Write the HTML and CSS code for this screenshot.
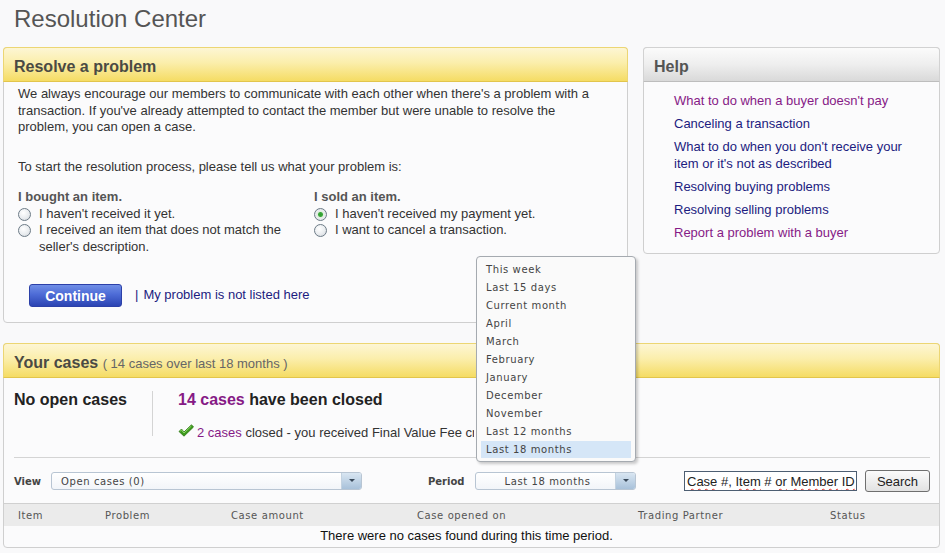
FILE: index.html
```html
<!DOCTYPE html>
<html lang="en">
<head>
    <meta charset="UTF-8">
    <title>Resolution Center</title>
    <link rel="stylesheet" href="styles.css">
</head>
<body>
    <div class="page">
        <h1 class="page-title">Resolution Center</h1>

        <div class="top-row">
            <div class="box resolve">
                <div class="box-head yellow"><h2>Resolve a problem</h2></div>
                <div class="resolve-body">
                    <p class="intro">We always encourage our members to communicate with each other when there's a problem with a transaction. If you've already attempted to contact the member but were unable to resolve the problem, you can open a case.</p>
                    <p class="prompt">To start the resolution process, please tell us what your problem is:</p>

                    <div class="choices">
                        <div class="choice-group">
                            <h3>I bought an item.</h3>
                            <label class="option"><input type="radio" name="problem"><span>I haven't received it yet.</span></label>
                            <label class="option"><input type="radio" name="problem"><span>I received an item that does not match the seller's description.</span></label>
                        </div>
                        <div class="choice-group">
                            <h3>I sold an item.</h3>
                            <label class="option"><input type="radio" name="problem" checked><span>I haven't received my payment yet.</span></label>
                            <label class="option"><input type="radio" name="problem"><span>I want to cancel a transaction.</span></label>
                        </div>
                    </div>

                    <div class="actions">
                        <button class="btn-continue">Continue</button>
                        <span class="sep">|</span>
                        <a href="#" class="link">My problem is not listed here</a>
                    </div>
                </div>
            </div>

            <div class="box help">
                <div class="box-head gray"><h2>Help</h2></div>
                <ul class="help-links">
                    <li><a href="#" class="visited">What to do when a buyer doesn't pay</a></li>
                    <li><a href="#" class="link">Canceling a transaction</a></li>
                    <li><a href="#" class="link">What to do when you don't receive your item or it's not as described</a></li>
                    <li><a href="#" class="link">Resolving buying problems</a></li>
                    <li><a href="#" class="link">Resolving selling problems</a></li>
                    <li><a href="#" class="visited">Report a problem with a buyer</a></li>
                </ul>
            </div>
        </div>

        <div class="box cases">
            <div class="box-head yellow">
                <h2>Your cases <span class="count">( 14 cases over last 18 months )</span></h2>
            </div>

            <div class="summary">
                <div class="open-cases">No open cases</div>
                <div class="closed-cases">
                    <div class="closed-title"><a href="#" class="visited">14 cases</a> have been closed</div>
                    <div class="closed-line">
                        <svg class="check" width="16" height="13" viewBox="0 0 16 13">
                            <path d="M1 7.5 L3.5 5 L6 8 L13.5 0.8 L15.5 3 L6 12.2 Z" fill="#3c9a1c" stroke="#2a7410" stroke-width="0.8" stroke-linejoin="round"/>
                            <path d="M2.2 7.2 L3.5 6 L6 9 L13.4 2" fill="none" stroke="#8fd86a" stroke-width="1"/>
                        </svg>
                        <span class="closed-text"><a href="#" class="visited">2 cases</a> closed - you received Final Value Fee credit</span>
                    </div>
                </div>
            </div>

            <div class="filters">
                <div class="filter view-filter">
                    <span class="filter-label">View</span>
                    <div class="select wide">
                        <span class="select-text">Open cases (0)</span>
                        <span class="select-arrow"></span>
                    </div>
                </div>

                <div class="filter period-filter">
                    <span class="filter-label">Period</span>
                    <div class="select-wrap">
                        <div class="select narrow">
                            <span class="select-text centered">Last 18 months</span>
                            <span class="select-arrow"></span>
                        </div>
                        <ul class="dropdown">
                            <li>This week</li>
                            <li>Last 15 days</li>
                            <li>Current month</li>
                            <li>April</li>
                            <li>March</li>
                            <li>February</li>
                            <li>January</li>
                            <li>December</li>
                            <li>November</li>
                            <li>Last 12 months</li>
                            <li class="selected">Last 18 months</li>
                        </ul>
                    </div>
                </div>

                <div class="search">
                    <div class="search-input"><span class="sq">Case</span> #, <span class="sq">Item</span> # <span class="sq">or</span> <span class="sq">Member</span> <span class="sq">ID</span></div>
                    <button class="btn-search">Search</button>
                </div>
            </div>

            <div class="table-head">
                <span class="col c-item">Item</span>
                <span class="col c-problem">Problem</span>
                <span class="col c-amount">Case amount</span>
                <span class="col c-opened">Case opened on</span>
                <span class="col c-partner">Trading Partner</span>
                <span class="col c-status">Status</span>
            </div>
            <div class="empty-row">There were no cases found during this time period.</div>
        </div>
    </div>
</body>
</html>
```

FILE: styles.css
```css
* {
    margin: 0;
    padding: 0;
    box-sizing: border-box;
}

body {
    font-family: "Liberation Sans", Arial, sans-serif;
    font-size: 13px;
    color: #333;
    background: #f9f9fa;
}

a {
    text-decoration: none;
}

.link {
    color: #1c1c80;
}

.visited {
    color: #861a86;
}

.page {
    padding: 0 5px 0 3px;
}

.page-title {
    font-size: 24px;
    font-weight: normal;
    color: #555;
    height: 47px;
    padding: 5px 0 0 11px;
}

/* boxes */
.box {
    background: #fbfbfc;
    border: 1px solid #cfcfcf;
    border-radius: 4px;
}

.box-head {
    height: 35px;
    display: flex;
    align-items: center;
    padding-left: 10px;
    border-radius: 4px 4px 0 0;
    margin: -1px -1px 0 -1px;
}

.box-head h2 {
    font-size: 16px;
    font-weight: bold;
    color: #4a4a44;
    padding-top: 4px;
}

.box-head.yellow {
    background: linear-gradient(#fdf6d4 0%, #fbeeab 45%, #f5dc64 100%);
    border: 1px solid #ecd673;
    border-bottom-color: #e2c54c;
}

.box-head.gray {
    background: linear-gradient(#fbfbfb 0%, #eeeeee 50%, #d9d9d9 100%);
    border: 1px solid #d2d2d2;
    border-bottom-color: #bdbdbd;
}

.box-head.gray h2 {
    color: #555;
}

.top-row {
    display: flex;
    gap: 15px;
    align-items: flex-start;
}

/* resolve a problem */
.resolve {
    width: 625px;
    height: 276px;
}

.resolve-body {
    padding: 4px 14px 0 14px;
    line-height: 16.5px;
}

.intro {
    width: 590px;
}

.prompt {
    margin-top: 23px;
}

.choices {
    display: flex;
    margin-top: 14px;
}

.choice-group {
    width: 296px;
}

.choice-group h3 {
    font-size: 13px;
    font-weight: bold;
    color: #555;
}

.option {
    display: flex;
    align-items: flex-start;
}

.option input {
    appearance: none;
    flex: none;
    width: 13px;
    height: 13px;
    margin: 2px 8px 0 0;
    border: 1px solid #6d7b87;
    border-radius: 50%;
    background: radial-gradient(circle at 40% 35%, #ffffff 0%, #e9ecef 55%, #cfd3d7 100%);
}

.option input:checked {
    background: radial-gradient(circle, #2f9b2f 0, #3aa83a 2px, #dfeedd 3px, #e9ecef 60%, #cfd3d7 100%);
}

.option span {
    width: 250px;
}

.actions {
    display: flex;
    align-items: center;
    margin-top: 29px;
    padding-left: 11px;
}

.btn-continue {
    width: 93px;
    height: 23px;
    border: 1px solid #2c40a8;
    border-radius: 3px;
    background: linear-gradient(#6f8ee6 0%, #4d6bd6 45%, #2b44b3 100%);
    color: #fff;
    font-family: "Liberation Sans", Arial, sans-serif;
    font-size: 14px;
    font-weight: bold;
}

.sep {
    margin: 0 5px 0 13px;
    color: #1c1c80;
}

/* help */
.help {
    width: 297px;
    height: 207px;
}

.help-links {
    list-style: none;
    padding: 11px 20px 0 30px;
    line-height: 16.5px;
}

.help-links li {
    margin-bottom: 6.5px;
}

/* your cases */
.cases {
    margin-top: 20px;
    width: 937px;
    height: 205px;
}

.cases .count {
    font-size: 13px;
    font-weight: normal;
    color: #666;
}

.summary {
    display: flex;
    margin: 0 9px 0 10px;
    padding: 13px 0 0;
    border-bottom: 1px solid #d4d4d4;
    height: 80px;
}

.open-cases {
    width: 139px;
    font-size: 16px;
    font-weight: bold;
    color: #222;
    border-right: 1px solid #d4d4d4;
    height: 45px;
}

.closed-cases {
    padding-left: 25px;
}

.closed-title {
    font-size: 16px;
    font-weight: bold;
    color: #222;
}

.closed-line {
    margin-top: 16px;
    display: flex;
    align-items: center;
    gap: 3px;
}

/* the period menu covers the end of this line */
.closed-text {
    width: 277px;
    white-space: nowrap;
    overflow: hidden;
}

.check {
    margin-top: -4px;
}

.filters {
    display: flex;
    align-items: center;
    height: 45px;
    padding: 1px 9px 0 10px;
}

.filter {
    display: flex;
    align-items: center;
}

.filter-label {
    font-family: "DejaVu Sans", Verdana, sans-serif;
    font-size: 10px;
    font-weight: bold;
    color: #444;
}

.view-filter .filter-label {
    width: 37px;
}

.period-filter {
    margin-left: 66px;
}

.period-filter .filter-label {
    width: 47px;
}

.select {
    display: flex;
    align-items: center;
    height: 18px;
    border: 1px solid #b8c5d3;
    border-radius: 3px;
    background: linear-gradient(#ffffff, #f2f5f9);
    font-family: "DejaVu Sans", Verdana, sans-serif;
    font-size: 10px;
    color: #444;
    overflow: hidden;
}

.select.wide {
    width: 311px;
}

.select.narrow {
    width: 161px;
}

.select-text {
    flex: 1;
    padding-left: 9px;
    letter-spacing: 0.6px;
}

.select-text.centered {
    text-align: center;
    padding-left: 4px;
}

.select-arrow {
    width: 20px;
    height: 100%;
    background: linear-gradient(#d9e6f2, #a8c1da);
    border-left: 1px solid #c3d2e0;
    position: relative;
}

.select-arrow::after {
    content: "";
    position: absolute;
    left: 7px;
    top: 6px;
    border-left: 3px solid transparent;
    border-right: 3px solid transparent;
    border-top: 3px solid #39495a;
}

.select-wrap {
    position: relative;
}

/* open period menu, drawn above the select */
.dropdown {
    position: absolute;
    left: 1px;
    bottom: 28px;
    width: 160px;
    list-style: none;
    padding: 4px 4px 3px 4px;
    background: #fafafa;
    border: 1px solid #a5aab0;
    border-radius: 4px;
    box-shadow: 2px 2px 3px rgba(0, 0, 0, 0.2);
    font-family: "DejaVu Sans", Verdana, sans-serif;
    font-size: 10px;
    letter-spacing: 0.6px;
    color: #444;
    z-index: 5;
}

.dropdown li {
    height: 18px;
    line-height: 18px;
    padding-left: 5px;
}

.dropdown li.selected {
    background: #d5e6f7;
    height: 17px;
    line-height: 17px;
}

.search {
    display: flex;
    align-items: center;
    margin-left: auto;
    gap: 8px;
}

.search-input {
    width: 173px;
    height: 20px;
    border: 1px solid #4d5e72;
    background: #fff;
    padding-left: 2px;
    line-height: 19px;
    font-size: 13px;
    color: #222;
    white-space: nowrap;
    overflow: hidden;
}

.sq {
    text-decoration: underline wavy #e0302c;
    text-decoration-thickness: 1px;
    text-underline-offset: 2px;
}

.btn-search {
    width: 65px;
    height: 22px;
    border: 1px solid #6f6f6f;
    border-radius: 3px;
    background: linear-gradient(#fbfbfb, #e2e2e2);
    font-family: "Liberation Sans", Arial, sans-serif;
    font-size: 13px;
    color: #222;
}

.table-head {
    display: flex;
    height: 23px;
    align-items: center;
    background: #ebebeb;
    border-top: 1px solid #d0d0d0;
    font-family: "DejaVu Sans", Verdana, sans-serif;
    font-size: 10px;
    letter-spacing: 0.6px;
    color: #555;
}

.col {
    flex: none;
}

.c-item { width: 101px; padding-left: 14px; }
.c-problem { width: 126px; }
.c-amount { width: 186px; }
.c-opened { width: 221px; }
.c-partner { width: 192px; }

.empty-row {
    text-align: center;
    line-height: 20px;
    color: #111;
    padding-right: 10px;
}
```
